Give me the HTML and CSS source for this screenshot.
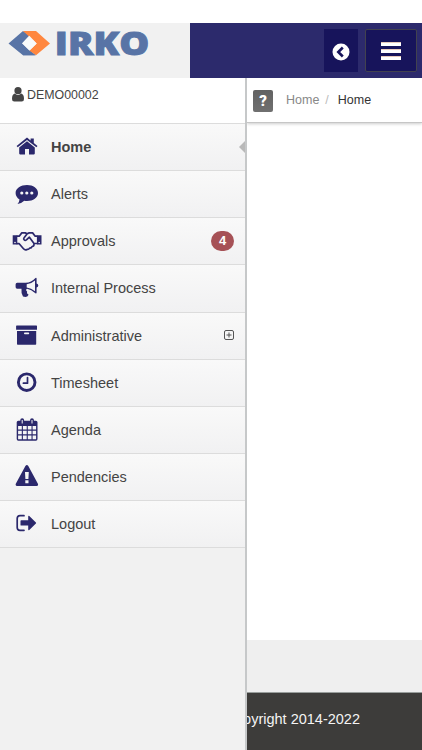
FILE: index.html
```html
<!DOCTYPE html>
<html lang="en">
<head>
<meta charset="utf-8">
<title>IRKO</title>
<link rel="stylesheet" href="styles.css">
</head>
<body>
<div class="app">
  <header class="topbar">
    <div class="brand">
      <svg width="190" height="55" viewBox="0 0 190 55">
        <path fill="#5874a6" d="M8.500 20.500 23 8l6.500 4.500-7.500 8 13 11.800H23z"/>
        <path fill="#ff873f" d="M23 8h13l14 12.500-14 11.800-6.700-4.500 7.400-7.300z"/>
        <path fill="#f8fafa" d="m22 20.500 7.300-7.700 7.400 7.700-7.400 7.300z"/>
        <path fill="#5874a6" d="m22 20.500 7.300 7.300 6.700 4.500H23z"/>
        <text class="wordmark" x="54.800" y="31.900" textLength="94.500" lengthAdjust="spacingAndGlyphs">IRKO</text>
      </svg>
    </div>
    <div class="actions">
      <button class="back" aria-label="Back"><svg width="18" height="18" viewBox="0 0 18 18"><circle cx="9" cy="9" r="8.500" fill="#fff"/><path d="m10.800 4.500-4.500 4.500 4.500 4.500" fill="none" stroke="#17145b" stroke-width="2.600"/></svg></button>
      <button class="toggle" aria-label="Menu"><span></span><span></span><span></span></button>
    </div>
  </header>
  <div class="body">
    <aside class="sidebar">
      <div class="user"><svg width="12" height="15" viewBox="0 0 12 15"><circle cx="6" cy="3.700" r="3.600"/><path d="M2.700 6.600Q6 9.500 9.300 6.600 12 7.400 12 12q0 2.600-2.300 2.600H2.300Q0 14.600 0 12 0 7.400 2.700 6.600z"/></svg><span>DEMO00002</span></div>
      <nav class="menu">
        <a class="item active"><svg class="icon" viewBox="0 0 30 24"><path d="M4.600 11 15 2.600l3.600 2.900V3.400h3.200V8l3.700 3-1.100 1.300L15 4.900l-9.300 7.400zM7.200 12.500 15 6.300l7.800 6.200v6.100q0 .8-.8.800h-5v-5.300h-4v5.300H8q-.8 0-.8-.8z"/></svg><span>Home</span><i class="arrow"></i></a>
        <a class="item"><svg class="icon" viewBox="0 0 30 24"><path fill-rule="evenodd" d="M15 3c6.200 0 11 3.500 11 8s-4.800 8-11 8q-1.400 0-2.700-.2-3 2.800-6.800 3.200 1.900-2 2-4.500C5 15.900 3.600 13.600 3.600 11c0-4.500 5.200-8 11.400-8zM9.800 9.400a1.600 1.600 0 1 0 0 3.200 1.600 1.600 0 0 0 0-3.200zm5 0a1.600 1.600 0 1 0 0 3.200 1.600 1.600 0 0 0 0-3.200zm5 0a1.600 1.600 0 1 0 0 3.200 1.600 1.600 0 0 0 0-3.200z"/></svg><span>Alerts</span></a>
        <a class="item"><svg class="icon" viewBox="0 0 30 24"><path fill-rule="evenodd" d="M.7 6.300h4.600v9.200H.7zM3 12.700a.8.800 0 1 0 0 1.600.8.800 0 0 0 0-1.600zM24.900 6.300h4.600v9.200h-4.600zm2.300 6.400a.8.800 0 1 0 0 1.600.8.800 0 0 0 0-1.600z"/><path class="line" d="M5.300 7.200h1.900l2.600-3.300h3.400l2 .9 2-.9h3.400L23.200 7.200h1.700M5.300 14.700h1.900l4.300 5q1.600 1.800 3.500.7 1.700.4 2.600-1.200 1.900.1 2.500-1.700 2-.1 1.900-2.400M24.900 14.500H22l-4.600-6.300-3 2.700q-1.300 1-2.300-.1-.9-1 0-2.100l3.100-3.900"/></svg><span>Approvals</span><b class="badge">4</b></a>
        <a class="item"><svg class="icon" viewBox="0 0 30 24"><path fill-rule="evenodd" d="M5.200 6.800h8.400q5.700-.5 9.900-4.900.9-.6 1.100.5v5.200q1.700.4 1.700 1.900t-1.700 1.900v5.400q-.2 1.200-1.200.4-4.200-4-8.300-4.500-2 1 0 2.700-1 1.700 1.500 3.400-1.500 3.200-5.600 1.700-2.100-4.100-1.500-7.800H5.200q-1.600 0-1.600-1.600V8.400q0-1.600 1.600-1.600zm9.500 1.500v3.100q4.600.6 8.300 3.900V4.400q-3.700 3.300-8.300 3.900z"/></svg><span>Internal Process</span></a>
        <a class="item"><svg class="icon" viewBox="0 0 30 24"><path fill-rule="evenodd" d="M4.700 1.500h19.700q.6 0 .6.600v3.600H4.100V2.100q0-.6.600-.6zM5 7h19.200v13q0 .7-.7.700H5.700q-.7 0-.7-.7zm7.800 1.600a.8.800 0 0 0 0 1.600h3.600a.8.800 0 0 0 0-1.600z"/></svg><span>Administrative</span><svg class="plus" width="12" height="12" viewBox="0 0 12 12"><rect x="1.500" y="1.500" width="9" height="9" rx="1.500"/><path d="M3.500 6h5M6 3.500v5"/></svg></a>
        <a class="item"><svg class="icon" viewBox="0 0 30 24"><circle class="ring" cx="14.700" cy="11.200" r="8.300"/><path class="line" d="M15.500 6.500v5.700h-4.100"/></svg><span>Timesheet</span></a>
        <a class="item"><svg class="icon" viewBox="0 0 30 24"><path fill-rule="evenodd" d="M6.300 2.700h2V2q0-1.800 1.900-1.800T12.100 2v.7h6V2q0-1.800 1.900-1.800T21.900 2v.7h2q1.600 0 1.600 1.600v16.800q0 1.600-1.600 1.600H6.300q-1.600 0-1.600-1.600V4.300q0-1.600 1.600-1.600zM9.700 1.900v3.500h1V1.900zm9.800 0v3.500h1V1.900zM6.100 8.100v3.400h3.700V8.100zm4.800 0v3.400h3.800V8.100zm4.900 0v3.400h3.700V8.100zm4.800 0v3.400h3.500V8.100zM6.100 12.700v3.500h3.700v-3.500zm4.800 0v3.500h3.800v-3.500zm4.900 0v3.500h3.700v-3.500zm4.800 0v3.500h3.500v-3.500zM6.100 17.400v3.900h3.700v-3.900zm4.800 0v3.900h3.800v-3.900zm4.900 0v3.900h3.700v-3.900zm4.800 0v3.900h3.500v-3.900z"/></svg><span>Agenda</span></a>
        <a class="item"><svg class="icon" viewBox="0 0 30 24"><path fill-rule="evenodd" d="M13.400 1q1.500-1.800 2.900 0l9.600 17.800q.7 2-1.400 2.200H5.200q-2.100-.2-1.400-2.200zM13 7l.4 7h3l.4-7zm.3 8.300v3h3.200v-3z"/></svg><span>Pendencies</span></a>
        <a class="item"><svg class="icon" viewBox="0 0 30 24"><path class="line" d="M12 3.700H8q-2.800 0-2.800 2.800v9q0 2.800 2.800 2.800h4"/><path d="M9.200 8.300h7V4.400q.2-1 1.100-.4l6.600 6.400q.5.600 0 1.200l-6.600 6.400q-.9.600-1.100-.4v-4H9.200q-.7 0-.7-.7V9q0-.7.700-.7z"/></svg><span>Logout</span></a>
      </nav>
    </aside>
    <main class="content">
      <div class="crumbs"><span class="help">?</span><span class="parent">Home</span><span class="slash">/</span><span class="current">Home</span></div>
      <div class="page"></div>
      <div class="strip"></div>
      <footer class="footer"><span>Copyright 2014-2022</span></footer>
    </main>
  </div>
</div>
</body>
</html>
```
FILE: styles.css
```css
* { box-sizing: border-box; }
body { margin: 0; background: #fff; font: 14.5px "Liberation Sans", Arial, sans-serif; color: #444; }
.app { height: 750px; padding-top: 23px; display: flex; flex-direction: column; overflow: hidden; }
.topbar { height: 55px; flex: none; display: flex; justify-content: space-between; background: #2c2a6c; }
.brand { width: 190px; background: #f1f1f1; }
.brand svg { display: block; }
.wordmark { font: 800 32px "Open Sans", sans-serif; fill: #5874a6; stroke: #5874a6; stroke-width: .9; }
.actions { display: flex; gap: 7px; padding: 6px 5px 0 0; }
.actions button { border: 0; padding: 0; background: #17145b; height: 43px; display: flex; align-items: center; justify-content: center; }
.actions .back { width: 34px; padding-top: 2px; }
.actions .toggle { width: 52px; border: 1px solid #42424f; border-radius: 2px; flex-direction: column; gap: 3px; padding-top: 1px; }
.toggle span { width: 20px; height: 4px; background: #fff; border-top: 1px solid #e7c9bc; }
.body { flex: 1; min-height: 0; display: flex; }
.sidebar { width: 247px; flex: none; border-right: 2px solid #c6c8c9; background: #f1f1f1; }
.user { height: 45px; background: #fff; display: flex; align-items: flex-start; padding: 9px 0 0 12px; gap: 3px; font-size: 12.400px; line-height: 17px; }
.user svg { fill: #444; }
.item { height: 47.150px; display: flex; align-items: center; position: relative; padding: 0 11px 0 12px; border-top: 1px solid #dcdcdc; background: linear-gradient(#f9f9f9, #f1f1f2); }
.menu { border-bottom: 1px solid #dcdcdc; }
.icon { width: 30px; height: 24px; margin-right: 9px; fill: #2b286c; }
.icon .line, .icon .ring { fill: none; stroke: #2b286c; stroke-width: 1.700; stroke-linejoin: round; stroke-linecap: round; }
.icon .ring { stroke-width: 2.900; }
.active { font-weight: bold; }
.arrow { position: absolute; right: 0; top: 17px; border: 6px solid transparent; border-left: 0; border-right-color: #b9b9b9; }
.badge { margin-left: auto; width: 23px; height: 20px; border-radius: 10px; background: #a65156; color: #fff; font-size: 13px; line-height: 20px; text-align: center; }
.plus { margin: -2px -1px 0 auto; fill: none; stroke: #555; stroke-width: 1; }
.content { flex: 1; min-width: 0; display: flex; flex-direction: column; overflow: hidden; }
.crumbs { height: 44.500px; flex: none; display: flex; align-items: center; padding-left: 6px; font-size: 12.500px; border-bottom: 1px solid #c6c6c6; box-shadow: 0 1px 3px #ccc; }
.help { width: 20px; height: 22px; margin: 2px 13px 0 0; background: linear-gradient(#626262, #707070); border-radius: 2px; color: #fff; font: 900 15px/22px Roboto, sans-serif; text-align: center; }
.parent { color: #888; }
.slash { color: #bbb; margin: 0 9px 0 6px; }
.current { color: #333; }
.page { flex: 1; }
.strip { height: 52px; background: #efefef; }
.footer { height: 58px; background: #3d3c3a; border-top: 1px solid #999e9c; color: #f4f4f4; display: flex; justify-content: flex-end; padding: 18px 62px 0 0; line-height: 17px; white-space: nowrap; }
```
